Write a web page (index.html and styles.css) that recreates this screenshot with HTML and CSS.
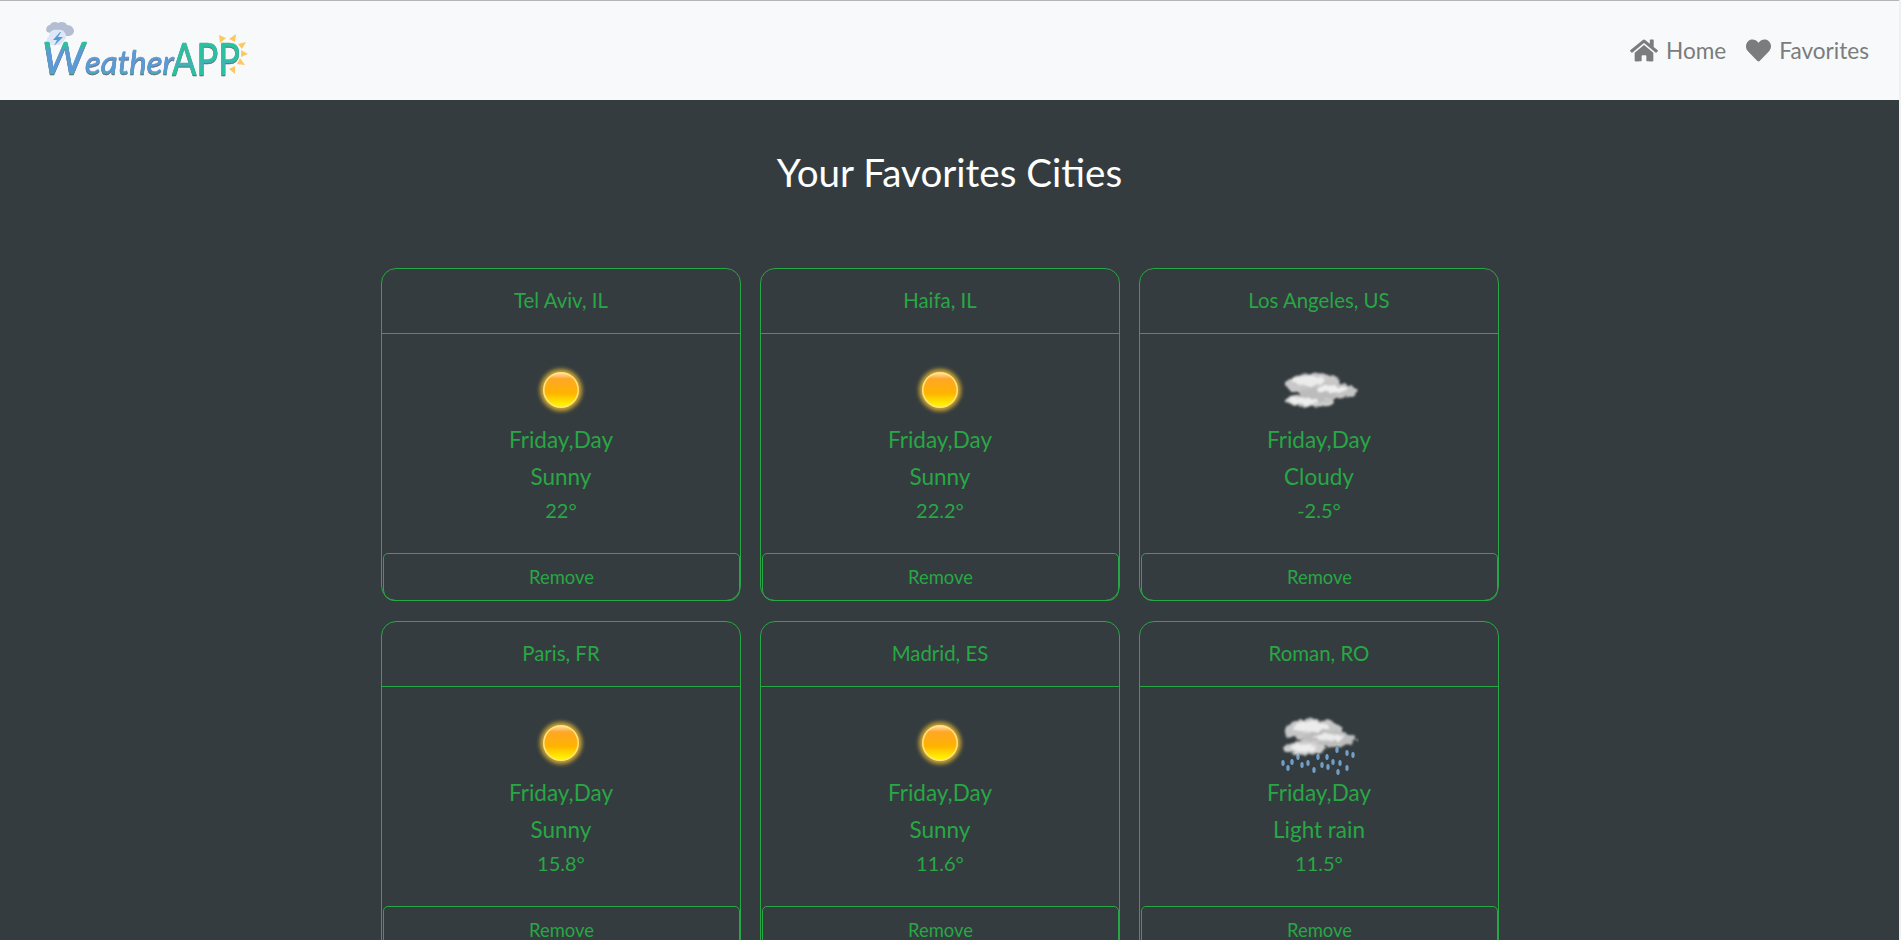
FILE: index.html
```html
<!DOCTYPE html>
<html>
  <head>
    <title>WeatherApp - Favorites</title>
    <link rel="stylesheet" href="styles.css">
  </head>
  <body>
    <svg class="defs" width="0" height="0">
      <defs>
        <linearGradient id="logoText" x1="0" y1="0" x2="0" y2="1">
          <stop offset="0.28" stop-color="#2cc0a0"/>
          <stop offset="0.4" stop-color="#5b9bd5"/>
          <stop offset="0.76" stop-color="#5b9bd5"/>
          <stop offset="0.83" stop-color="#2cc0a0"/>
        </linearGradient>
        <linearGradient id="logoApp" x1="0" y1="0" x2="0" y2="1">
          <stop offset="0.55" stop-color="#2cc0a0"/>
          <stop offset="0.6" stop-color="#4fa6c6"/>
          <stop offset="0.68" stop-color="#2cc0a0"/>
        </linearGradient>
        <linearGradient id="sunFill" x1="0" y1="0" x2="0" y2="1">
          <stop offset="0" stop-color="#ffd9a0"/>
          <stop offset="0.16" stop-color="#ffa726"/>
          <stop offset="0.6" stop-color="#ffb300"/>
          <stop offset="0.95" stop-color="#fff200"/>
        </linearGradient>
        <filter id="glow" x="-40%" y="-40%" width="180%" height="180%">
          <feGaussianBlur stdDeviation="2"/>
        </filter>
        <!-- roughens the ellipses so they read as cloud -->
        <filter id="soft" x="-20%" y="-30%" width="140%" height="160%">
          <feTurbulence type="fractalNoise" baseFrequency="0.14" numOctaves="2" seed="4" result="noise"/>
          <feDisplacementMap in="SourceGraphic" in2="noise" scale="7" xChannelSelector="R" yChannelSelector="G"/>
          <feGaussianBlur stdDeviation="0.9"/>
        </filter>
        <filter id="drops" x="-10%" y="-10%" width="120%" height="120%">
          <feGaussianBlur stdDeviation="0.6"/>
        </filter>
        <symbol id="sun" viewBox="0 0 80 64">
          <circle cx="40" cy="32" r="21" fill="#ffc933" opacity="0.75" filter="url(#glow)"/>
          <circle cx="40" cy="32" r="18" fill="#ffe680"/>
          <circle cx="40" cy="32" r="16.5" fill="url(#sunFill)"/>
        </symbol>
        <symbol id="cloud" viewBox="0 0 80 64">
          <g filter="url(#soft)">
            <ellipse cx="34" cy="26" rx="27" ry="11" fill="#c8c8c8"/>
            <ellipse cx="50" cy="33" rx="28" ry="8" fill="#c4c4c4"/>
            <ellipse cx="30" cy="43" rx="25" ry="6" fill="#cfcfcf"/>
            <ellipse cx="38" cy="37" rx="18" ry="7" fill="#bcbcbc"/>
            <ellipse cx="30" cy="23" rx="17" ry="5" fill="#ececec"/>
            <ellipse cx="52" cy="31" rx="15" ry="3.5" fill="#efefef"/>
            <ellipse cx="25" cy="43" rx="15" ry="3.5" fill="#eeeeee"/>
          </g>
        </symbol>
        <symbol id="rain" viewBox="0 0 80 64">
          <g fill="#6f9fc8" filter="url(#drops)">
            <ellipse cx="19" cy="46" rx="1.7" ry="3"/>
            <ellipse cx="29" cy="52" rx="1.7" ry="3"/>
            <ellipse cx="13" cy="51" rx="1.7" ry="3"/>
            <ellipse cx="4" cy="52" rx="1.7" ry="3"/>
            <ellipse cx="23" cy="54" rx="1.7" ry="3"/>
            <ellipse cx="9" cy="57" rx="1.7" ry="3"/>
            <ellipse cx="43" cy="54" rx="1.7" ry="3"/>
            <ellipse cx="49" cy="56" rx="1.7" ry="3"/>
            <ellipse cx="61" cy="52" rx="1.7" ry="3"/>
            <ellipse cx="68" cy="57" rx="1.7" ry="3"/>
            <ellipse cx="35" cy="59" rx="1.7" ry="3"/>
            <ellipse cx="59" cy="61" rx="1.7" ry="3"/>
            <ellipse cx="74" cy="44" rx="1.7" ry="3"/>
            <ellipse cx="58" cy="39" rx="1.7" ry="3"/>
            <ellipse cx="68" cy="42" rx="1.7" ry="3"/>
            <ellipse cx="39" cy="46" rx="1.7" ry="3"/>
            <ellipse cx="48" cy="46" rx="1.7" ry="3"/>
            <ellipse cx="54" cy="51" rx="1.7" ry="3"/>
          </g>
          <g filter="url(#soft)">
            <ellipse cx="34" cy="19" rx="29" ry="11" fill="#c6c6c6"/>
            <ellipse cx="50" cy="28" rx="28" ry="8" fill="#bdbdbd"/>
            <ellipse cx="26" cy="37" rx="21" ry="7" fill="#cccccc"/>
            <ellipse cx="32" cy="16" rx="18" ry="5" fill="#ececec"/>
            <ellipse cx="50" cy="26" rx="15" ry="3.5" fill="#ebebeb"/>
            <ellipse cx="24" cy="37" rx="13" ry="3.5" fill="#eeeeee"/>
          </g>
        </symbol>
      </defs>
    </svg>

    <nav class="navbar">
      <a class="logo" href="#">
        <!-- viewBox uses page coordinates so the pieces are easy to line up -->
        <svg width="220" height="68" viewBox="37 17 220 68">
          <path d="M47 32c-2-3 0-7 3-7 1-3 6-4 8-2 3-2 8-1 9 2 4 0 7 3 7 6 0 3-3 5-6 5H60z" fill="#b3bed3"/>
          <path d="M49 45c-3-1-3-7 0-9 0-4 4-7 8-6 3-1 7 0 8 3 1 1 1 3 1 5-2 2-3 5-6 7z" fill="#dde7f6"/>
          <path d="M60 32l-7 8h4l-3 6 9-9h-5l3-5z" fill="#5b9bd5"/>
          <text class="logo-word" y="74" fill="url(#logoText)" stroke="url(#logoText)"><tspan x="42" font-size="45">W</tspan><tspan font-size="33">eather</tspan></text>
          <text class="logo-word logo-app" x="172" y="75" fill="url(#logoApp)" stroke="url(#logoApp)" textLength="68" lengthAdjust="spacingAndGlyphs">APP</text>
          <g fill="#fcc960">
            <path d="M219 35l7 3-6 5z"/>
            <path d="M236 34l-1 8-6-3z"/>
            <path d="M246 42l-4 7-4-5z"/>
            <path d="M248 54l-7 3 0-7z"/>
            <path d="M245 65l-8-1 3-6z"/>
            <path d="M235 74l-6-5 6-3z"/>
          </g>
        </svg>
      </a>
      <div class="nav-links">
        <a class="nav-link" href="#">
          <svg class="nav-icon home-icon" viewBox="0 0 576 512"><path d="M280.37 148.26L96 300.11V464a16 16 0 0 0 16 16l112.06-.29a16 16 0 0 0 15.92-16V368a16 16 0 0 1 16-16h64a16 16 0 0 1 16 16v95.64a16 16 0 0 0 16 16.05L464 480a16 16 0 0 0 16-16V300L295.67 148.26a12.19 12.19 0 0 0-15.3 0zM571.6 251.47L488 182.56V44.05a12 12 0 0 0-12-12h-56a12 12 0 0 0-12 12v72.61L318.47 43a48 48 0 0 0-61 0L4.34 251.47a12 12 0 0 0-1.6 16.9l25.5 31A12 12 0 0 0 45.15 301l235.22-193.74a12.19 12.19 0 0 1 15.3 0L530.9 301a12 12 0 0 0 16.9-1.6l25.5-31a12 12 0 0 0-1.7-16.93z"/></svg>
          Home
        </a>
        <a class="nav-link" href="#">
          <svg class="nav-icon heart-icon" viewBox="0 0 512 512"><path d="M462.3 62.6C407.5 15.9 326 24.3 275.7 76.2L256 96.5l-19.7-20.3C186.1 24.3 104.5 15.9 49.7 62.6c-62.8 53.6-66.1 149.8-9.9 207.9l193.5 199.8c12.5 12.9 32.8 12.9 45.3 0l193.5-199.8c56.3-58.1 53-154.3-9.8-207.9z"/></svg>
          Favorites
        </a>
      </div>
    </nav>

    <h1 class="title">Your Favorites Cities</h1>

    <div class="cards">
      <div class="card">
        <div class="card-header">Tel Aviv, IL</div>
        <div class="card-body">
          <svg class="weather-icon"><use href="#sun"/></svg>
          <p class="day">Friday,Day</p>
          <p class="text">Sunny</p>
          <p class="temp">22°</p>
        </div>
        <button class="remove">Remove</button>
      </div>
      <div class="card">
        <div class="card-header">Haifa, IL</div>
        <div class="card-body">
          <svg class="weather-icon"><use href="#sun"/></svg>
          <p class="day">Friday,Day</p>
          <p class="text">Sunny</p>
          <p class="temp">22.2°</p>
        </div>
        <button class="remove">Remove</button>
      </div>
      <div class="card">
        <div class="card-header">Los Angeles, US</div>
        <div class="card-body">
          <svg class="weather-icon"><use href="#cloud"/></svg>
          <p class="day">Friday,Day</p>
          <p class="text">Cloudy</p>
          <p class="temp">-2.5°</p>
        </div>
        <button class="remove">Remove</button>
      </div>
      <div class="card">
        <div class="card-header">Paris, FR</div>
        <div class="card-body">
          <svg class="weather-icon"><use href="#sun"/></svg>
          <p class="day">Friday,Day</p>
          <p class="text">Sunny</p>
          <p class="temp">15.8°</p>
        </div>
        <button class="remove">Remove</button>
      </div>
      <div class="card">
        <div class="card-header">Madrid, ES</div>
        <div class="card-body">
          <svg class="weather-icon"><use href="#sun"/></svg>
          <p class="day">Friday,Day</p>
          <p class="text">Sunny</p>
          <p class="temp">11.6°</p>
        </div>
        <button class="remove">Remove</button>
      </div>
      <div class="card">
        <div class="card-header">Roman, RO</div>
        <div class="card-body">
          <svg class="weather-icon"><use href="#rain"/></svg>
          <p class="day">Friday,Day</p>
          <p class="text">Light rain</p>
          <p class="temp">11.5°</p>
        </div>
        <button class="remove">Remove</button>
      </div>
    </div>
  </body>
</html>
```

FILE: styles.css
```css
html {
  height: 100%;
  overflow: hidden;
  background: #f1f1f1;
}
body {
  font-family: Lato, "Open Sans", sans-serif;
  height: 100%;
  margin: 0 2px 0 0;
  padding: 0;
  overflow: hidden;
  background: #343c3f;
  color: #28a745;
  text-align: center;
}
.defs {
  display: block;
  height: 0;
}
.navbar {
  display: flex;
  justify-content: space-between;
  align-items: center;
  height: 99px;
  padding: 0 30px 0 37px;
  background: #f8f9fa;
  border-top: 1px solid #b5b5b5;
}
.logo {
  display: block;
  height: 68px;
}
.logo svg {
  overflow: visible;
}
.logo-word {
  font-family: Lato, sans-serif;
  font-style: italic;
  stroke-width: 0.5px;
  filter: drop-shadow(0 1px 0 #667);
}
.logo-app {
  font-style: normal;
  font-size: 44px;
}
.nav-links {
  display: flex;
  gap: 20px;
}
.nav-link {
  display: flex;
  align-items: center;
  gap: 8px;
  font-size: 22.6px;
  color: #7b7c7d;
  text-decoration: none;
}
.nav-icon {
  height: 25px;
  fill: #7b7c7d;
}
.home-icon {
  width: 28px;
}
.heart-icon {
  width: 25px;
}
.title {
  margin: 0;
  padding-top: 50px;
  font-size: 38.6px;
  font-weight: 400;
  line-height: 44px;
  color: white;
}
.cards {
  display: grid;
  grid-template-columns: repeat(3, 360px);
  column-gap: 19px;
  row-gap: 20px;
  justify-content: center;
  margin-top: 74px;
  margin-right: 19px;
}
.card {
  display: flex;
  flex-direction: column;
  height: 333px;
  box-sizing: border-box;
  border: 1px solid #28a745;
  border-radius: 15px;
}
.card-header {
  height: 65px;
  box-sizing: border-box;
  flex: none;
  border-bottom: 1px solid #28a745;
  font-size: 20.4px;
  line-height: 62px;
}
.card-body {
  flex: 1;
  padding-top: 27px;
  font-size: 22.5px;
}
.weather-icon {
  display: block;
  width: 80px;
  height: 64px;
  margin: -3px auto 0;
}
.card-body p {
  margin: 0;
}
.day {
  height: 36px;
  line-height: 36px;
}
.text {
  height: 37px;
  line-height: 37px;
}
.temp {
  font-size: 20px;
  line-height: 30px;
}
.remove {
  height: 48px;
  flex: none;
  margin: 0 0 -1px 1px;
  width: calc(100% - 1px);
  padding: 0;
  font-family: inherit;
  font-size: 18.4px;
  color: #28a745;
  background: transparent;
  border: 1px solid #28a745;
  border-radius: 5px 5px 11px 11px;
}
```
